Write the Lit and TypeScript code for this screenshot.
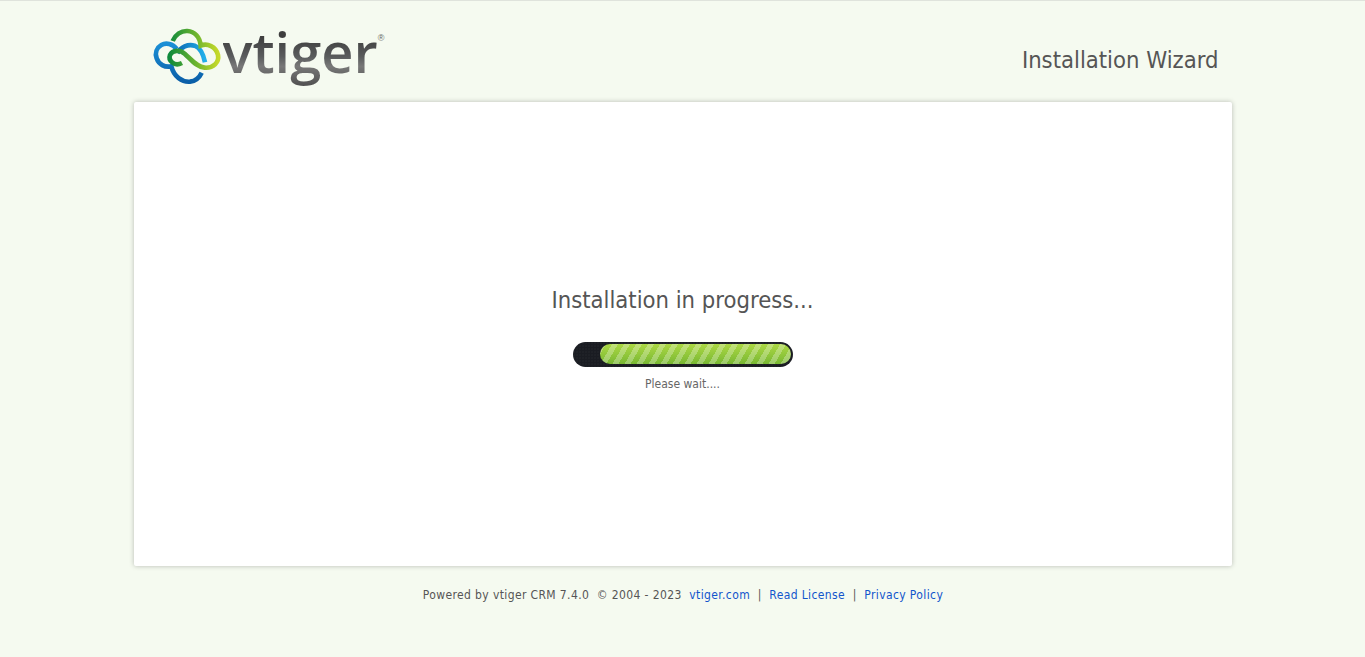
import { LitElement, css, html } from 'lit';
import { customElement } from 'lit/decorators.js';

@customElement('app-root')
export class AppRoot extends LitElement {
  static styles = css`
    :host {
      display: block;
      min-height: 657px;
      box-sizing: border-box;
      background: #f5faf0;
      border-top: 1px solid #dfe3dc;
      font-family: "DejaVu Sans", "Noto Sans", sans-serif;
      font-stretch: condensed;
      color: #555;
    }

    .page {
      width: 1098px;
      margin: 0 auto;
    }

    .header {
      height: 101px;
      display: flex;
      align-items: center;
      justify-content: space-between;
      padding: 0 13px 0 16px;
    }

    .logo {
      display: flex;
      align-items: flex-start;
      height: 60px;
      margin-top: 7px;
    }

    .wordmark {
      font-family: "Open Sans", sans-serif;
      font-stretch: normal;
      font-size: 56px;
      line-height: 70px;
      font-weight: 600;
      height: 70px;
      margin: -9px 0 0 -2px;
      background: linear-gradient(180deg, #3e3e3e 30%, #5a5c5d 58%, #787878 72%, #505050 100%);
      -webkit-background-clip: text;
      background-clip: text;
      color: transparent;
    }

    .reg {
      font-family: "Liberation Sans", sans-serif;
      font-size: 9px;
      line-height: 8px;
      color: #666;
      margin: 9px 0 0 0;
    }

    .wizard {
      font-size: 23.6px;
      line-height: 32px;
      color: #555;
      margin-top: 17px;
    }

    .card {
      height: 464px;
      background: #fff;
      border-radius: 2px;
      box-shadow: 0 0 5px rgba(0, 0, 0, 0.25);
      display: flex;
      flex-direction: column;
      align-items: center;
      padding-top: 182px;
      box-sizing: border-box;
    }

    .title {
      font-size: 23.6px;
      line-height: 32px;
      color: #555;
    }

    .bar {
      width: 220px;
      height: 25px;
      margin-top: 26px;
      box-sizing: border-box;
      padding: 2px 2px 3px 27px;
      background: #1a1c22 radial-gradient(circle at 1px 1px, #22242a 0.5px, transparent 1px) 0 0 / 3px 3px;
      border-radius: 13px;
    }

    .fill {
      height: 100%;
      border-radius: 10px;
      background:
        repeating-linear-gradient(
          120deg,
          rgba(255, 255, 255, 0.28) 0 5.2px,
          rgba(255, 255, 255, 0) 5.2px 10.4px
        ),
        linear-gradient(180deg, #acd844, #79b833);
    }

    .wait {
      font-size: 12px;
      line-height: 16px;
      margin-top: 9px;
      color: #666;
    }

    .footer {
      margin-top: 20px;
      padding-left: 1px;
      text-align: center;
      font-size: 12px;
      letter-spacing: 0.38px;
      line-height: 18px;
      color: #555;
      white-space: pre;
    }

    .footer a {
      color: #15c;
      text-decoration: none;
    }
  `;

  render() {
    return html`
      <div class="page">
        <header class="header">
          <div class="logo">
            <svg width="75" height="60" viewBox="0 0 225 180" fill="none" stroke-width="14">
              <defs>
                <linearGradient id="blue" x1="0" y1="0" x2="0" y2="1">
                  <stop offset="0" stop-color="#1b8fd6" />
                  <stop offset="1" stop-color="#0b5fa8" />
                </linearGradient>
                <linearGradient id="sky" x1="0" y1="0" x2="1" y2="0">
                  <stop offset="0" stop-color="#0b6cb5" />
                  <stop offset="1" stop-color="#22b0ea" />
                </linearGradient>
                <linearGradient id="green" x1="0" y1="0" x2="1" y2="0">
                  <stop offset="0" stop-color="#0f8a3c" />
                  <stop offset="0.55" stop-color="#6eb52e" />
                  <stop offset="1" stop-color="#c6d92a" />
                </linearGradient>
              </defs>
              <path
                stroke="url(#blue)"
                d="M80 72C68 56 48 52 34 60C20 68 14 84 20 100C26 118 44 128 64 124C72 155 96 172 120 170C136 168 148 158 155 143"
              />
              <path
                stroke="url(#sky)"
                d="M82 84C92 66 114 56 134 62C150 68 160 88 165 112"
              />
              <path
                stroke="url(#green)"
                d="M68 48C76 28 94 17 112 18C134 19 150 36 152 62C172 54 198 64 204 90C208 112 190 130 164 128C140 126 124 104 104 86C90 74 68 74 60 90C54 106 72 126 96 114"
              />
            </svg>
            <span class="wordmark">vtiger</span>
            <span class="reg">®</span>
          </div>
          <div class="wizard">Installation Wizard</div>
        </header>
        <main class="card">
          <div class="title">Installation in progress...</div>
          <div class="bar"><div class="fill"></div></div>
          <div class="wait">Please wait....</div>
        </main>
        <footer class="footer">Powered by vtiger CRM 7.4.0  © 2004 - 2023  <a>vtiger.com</a>  |  <a>Read License</a>  |  <a>Privacy Policy</a></footer>
      </div>
    `;
  }
}
